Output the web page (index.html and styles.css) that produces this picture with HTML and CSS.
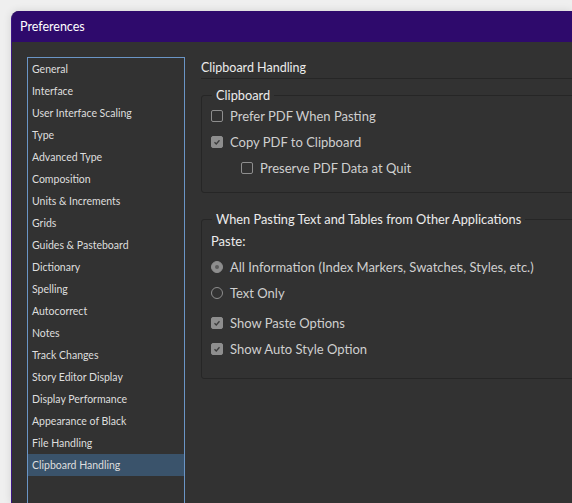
FILE: index.html
```html
<!DOCTYPE html>
<html lang="en">
<head>
    <meta charset="UTF-8">
    <title>Preferences</title>
    <link rel="stylesheet" href="styles.css">
</head>
<body>
    <div class="window">
        <div class="titlebar">Preferences</div>

        <div class="window-body">
            <ul class="nav-list">
                <li>General</li>
                <li>Interface</li>
                <li>User Interface Scaling</li>
                <li>Type</li>
                <li>Advanced Type</li>
                <li>Composition</li>
                <li>Units &amp; Increments</li>
                <li>Grids</li>
                <li>Guides &amp; Pasteboard</li>
                <li>Dictionary</li>
                <li>Spelling</li>
                <li>Autocorrect</li>
                <li>Notes</li>
                <li>Track Changes</li>
                <li>Story Editor Display</li>
                <li>Display Performance</li>
                <li>Appearance of Black</li>
                <li>File Handling</li>
                <li class="active">Clipboard Handling</li>
            </ul>

            <div class="panel">
                <div class="panel-title">Clipboard Handling</div>

                <fieldset class="group">
                    <legend>Clipboard</legend>
                    <div class="option">
                        <span class="check"></span>
                        <span>Prefer PDF When Pasting</span>
                    </div>
                    <div class="option">
                        <span class="check checked">
                            <svg viewBox="0 0 12 12"><path d="M3 6.2 5.1 8.3 9 3.9"/></svg>
                        </span>
                        <span>Copy PDF to Clipboard</span>
                    </div>
                    <div class="option indent">
                        <span class="check"></span>
                        <span>Preserve PDF Data at Quit</span>
                    </div>
                </fieldset>

                <fieldset class="group paste-group">
                    <legend>When Pasting Text and Tables from Other Applications</legend>
                    <div class="paste-label">Paste:</div>
                    <div class="option">
                        <span class="radio selected"></span>
                        <span>All Information (Index Markers, Swatches, Styles, etc.)</span>
                    </div>
                    <div class="option">
                        <span class="radio"></span>
                        <span>Text Only</span>
                    </div>
                    <div class="option spaced">
                        <span class="check checked">
                            <svg viewBox="0 0 12 12"><path d="M3 6.2 5.1 8.3 9 3.9"/></svg>
                        </span>
                        <span>Show Paste Options</span>
                    </div>
                    <div class="option">
                        <span class="check checked">
                            <svg viewBox="0 0 12 12"><path d="M3 6.2 5.1 8.3 9 3.9"/></svg>
                        </span>
                        <span>Show Auto Style Option</span>
                    </div>
                </fieldset>
            </div>
        </div>
    </div>
</body>
</html>
```

FILE: styles.css
```css
:root {
    --titlebar: #2e0a6c;
    --window-edge: #3b1684;
    --surface: #323232;
    --line: #262626;
    --nav-border: #6a95c6;
    --nav-active: #3a536b;
    --text: #cfcfcf;
    --text-bright: #ececec;
    --control: #8e8e8e;
}

* {
    box-sizing: border-box;
    margin: 0;
    padding: 0;
}

body {
    font-family: Lato, "Liberation Sans", sans-serif;
    background-color: #efefef;
    color: var(--text);
    height: 100vh;
    overflow: hidden;
}

.window {
    margin: 11px 0 0 11px;
    height: calc(100vh - 11px);
    background-color: var(--surface);
    border-left: 1px solid var(--window-edge);
    border-top-left-radius: 8px;
    box-shadow: 0 0 8px rgba(0,0,0,0.12);
    overflow: hidden;
    display: flex;
    flex-direction: column;
}

.titlebar {
    height: 31px;
    line-height: 31px;
    padding-left: 8px;
    background-color: var(--titlebar);
    color: #ffffff;
    font-size: 12.5px;
}

.window-body {
    flex: 1;
    display: flex;
    padding: 15px 0 0 15px;
}

/* Category list */
.nav-list {
    list-style: none;
    width: 158px;
    flex-shrink: 0;
    height: 480px;
    border: 1px solid var(--nav-border);
}

.nav-list li {
    height: 22px;
    line-height: 22px;
    padding-left: 4px;
    font-size: 10.5px;
    color: #dedede;
    white-space: nowrap;
}

.nav-list li.active {
    background-color: var(--nav-active);
}

/* Settings panel */
.panel {
    flex: 1;
    margin-left: 16px;
    margin-right: -30px;
}

.panel-title {
    height: 22px;
    line-height: 22px;
    font-size: 12.5px;
    color: var(--text-bright);
    border-bottom: 1px solid var(--line);
}

.group {
    margin-top: 9px;
    border: 1px solid var(--line);
    border-radius: 3px;
    padding: 0 0 11px 9px;
}

.group legend {
    margin-left: 1px;
    padding: 0 4px;
    font-size: 12.8px;
    line-height: 15px;
    color: var(--text-bright);
}

.paste-group {
    margin-top: 19px;
    padding-bottom: 16px;
}

.paste-label {
    margin-top: 2px;
    height: 25px;
    line-height: 25px;
    font-size: 13px;
    color: var(--text-bright);
}

.option {
    display: flex;
    align-items: center;
    gap: 7px;
    height: 26px;
    font-size: 13px;
    white-space: nowrap;
}

.option.indent {
    padding-left: 30px;
}

.option.spaced {
    margin-top: 4px;
}

.check {
    width: 12px;
    height: 12px;
    border: 1px solid var(--control);
    border-radius: 2px;
    flex-shrink: 0;
    display: flex;
}

.check.checked {
    background-color: var(--control);
}

.check svg {
    width: 100%;
    height: 100%;
    fill: none;
    stroke: #3c3c3c;
    stroke-width: 1.6;
}

.radio {
    width: 12px;
    height: 12px;
    border: 1px solid var(--control);
    border-radius: 50%;
    flex-shrink: 0;
    display: flex;
    align-items: center;
    justify-content: center;
}

.radio.selected {
    background-color: var(--control);
}

.radio.selected::after {
    content: "";
    width: 4px;
    height: 4px;
    border-radius: 50%;
    background-color: #5c5c5c;
}
```
